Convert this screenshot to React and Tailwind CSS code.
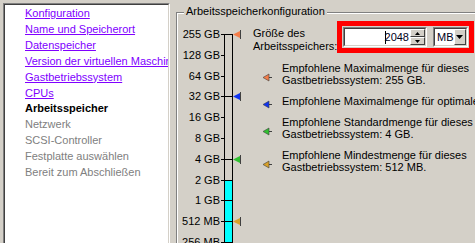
import React from "react";

const steps = [
  { name: "Konfiguration", state: "link" },
  { name: "Name und Speicherort", state: "link" },
  { name: "Datenspeicher", state: "link" },
  { name: "Version der virtuellen Maschine", state: "link" },
  { name: "Gastbetriebssystem", state: "link" },
  { name: "CPUs", state: "link" },
  { name: "Arbeitsspeicher", state: "current" },
  { name: "Netzwerk", state: "todo" },
  { name: "SCSI-Controller", state: "todo" },
  { name: "Festplatte auswählen", state: "todo" },
  { name: "Bereit zum Abschließen", state: "todo" },
];

const stepClass = {
  link: "text-[#8000ff] underline",
  current: "font-bold text-black",
  todo: "text-[#808080]",
};

const scale = ["255 GB", "128 GB", "64 GB", "32 GB", "16 GB", "8 GB", "4 GB", "2 GB", "1 GB", "512 MB", "256 MB"];
// tick rows in svg coords (svg top = y 24)
const ticks = [10, 31, 52, 72, 93, 114, 135, 156, 176, 197, 218];

const markers = [
  { y: 10, color: "#f47c48" },
  { y: 72, color: "#1034f0" },
  { y: 135, color: "#30c030" },
  { y: 197, color: "#d8a028" },
];

const legend = [
  { color: "#f47c48", lines: ["Empfohlene Maximalmenge für dieses", "Gastbetriebssystem: 255 GB."] },
  { color: "#1034f0", lines: ["Empfohlene Maximalmenge für optimale Leistung."] },
  { color: "#30c030", lines: ["Empfohlene Standardmenge für dieses", "Gastbetriebssystem: 4 GB."] },
  { color: "#d8a028", lines: ["Empfohlene Mindestmenge für dieses", "Gastbetriebssystem: 512 MB."] },
];

const Marker = ({ color }) => (
  <svg width="10" height="9" viewBox="0 0 10 9" className="shrink-0">
    <polygon points="1,4.5 7,1 7,8" fill={color} stroke="#404040" strokeWidth="0.6" />
    <rect x="7" y="4" width="3" height="1" fill="#404040" />
  </svg>
);

const Slider = () => (
  <svg width="24" height="240" viewBox="0 0 24 240" className="shrink-0">
    <rect x="5" y="156" width="7" height="84" fill="#00ffff" />
    <rect x="1" y="10" width="12" height="1" fill="#000" />
    <rect x="4" y="10" width="1" height="230" fill="#000" />
    <rect x="12" y="10" width="1" height="230" fill="#000" />
    {ticks.map((y) => (
      <rect key={y} x="1" y={y} width="4" height="1" fill="#000" />
    ))}
    {ticks.filter((y) => y >= 156).map((y) => (
      <rect key={"c" + y} x="4" y={y} width="9" height="1" fill="#000" />
    ))}
    {markers.map((m) => (
      <g key={m.y}>
        <rect x="4" y={m.y} width="9" height="1" fill="#000" />
        <polygon points={`13,${m.y + 0.5} 21,${m.y - 3.5} 21,${m.y + 4.5}`} fill={m.color} />
        <rect x="20" y={m.y - 4} width="1" height="9" fill="#404040" />
      </g>
    ))}
  </svg>
);

const SpinArrow = ({ up }) => (
  <svg width="5" height="3" viewBox="0 0 5 3">
    <polygon points={up ? "2.5,0 5,3 0,3" : "0,0 5,0 2.5,3"} fill="#000" />
  </svg>
);

export default function App() {
  return (
    <div className="w-[475px] h-[243px] overflow-hidden bg-[#d4d0c8] flex items-start font-['Liberation_Sans',Arial,sans-serif] text-[11px] text-black">
      {/* wizard steps */}
      <div className="ml-[3px] mt-[3px] w-[167px] h-[260px] shrink-0 border border-[#808080] border-r-white border-b-white">
        <div className="h-full border border-[#404040] border-r-[#d4d0c8] border-b-[#d4d0c8] bg-white pl-[20px] pt-[1px] overflow-hidden">
          {steps.map((s) => (
            <div key={s.name} className={`leading-[15.9px] whitespace-nowrap ${stepClass[s.state]}`}>
              {s.name}
            </div>
          ))}
        </div>
      </div>

      {/* group box */}
      <div className="ml-[6px] mt-[12px] w-[320px] h-[260px] shrink-0 relative border-t border-l border-[#808080]">
        <div className="absolute left-[7px] -top-[8px] px-[2px] bg-[#d4d0c8] leading-[13px]">
          Arbeitsspeicherkonfiguration
        </div>
        <div className="h-full border-t border-l border-white flex items-start">
          {/* scale */}
          <div className="flex items-start mt-[10px]">
            <div className="w-[42px] text-right">
              {scale.map((l) => (
                <div key={l} className="leading-[20.8px] whitespace-nowrap">{l}</div>
              ))}
            </div>
            <Slider />
          </div>

          {/* controls */}
          <div className="flex flex-col">
            <div className="flex items-start">
              <div className="w-[93px] pl-[9px] mt-[13px] leading-[13px] whitespace-nowrap">
                <div>Größe des</div>
                <div>Arbeitsspeichers:</div>
              </div>
              <div className="mt-[7px] w-[137px] h-[32px] border-[5px] border-[#ff0000] p-[1px] flex items-start gap-[6px]">
                {/* spin box */}
                <div className="w-[85px] h-[20px] border border-[#808080] border-r-white border-b-white">
                  <div className="h-full border border-[#404040] border-r-[#d4d0c8] border-b-[#d4d0c8] bg-white flex items-center justify-end">
                    <span className="w-px h-[13px] bg-black -mr-px" />
                    <span className="leading-[16px] pr-[1px] text-[#000020]">2048</span>
                    <div className="w-[15px] h-full flex flex-col">
                      <div className="h-1/2 bg-[#d4d0c8] border border-white border-r-[#404040] border-b-[#404040] flex items-center justify-center">
                        <SpinArrow up />
                      </div>
                      <div className="h-1/2 bg-[#d4d0c8] border border-white border-r-[#404040] border-b-[#404040] flex items-center justify-center">
                        <SpinArrow />
                      </div>
                    </div>
                  </div>
                </div>
                {/* unit combo */}
                <div className="w-[35px] h-[20px] border border-[#808080] border-r-white border-b-white">
                  <div className="h-full border border-[#404040] border-r-[#d4d0c8] border-b-[#d4d0c8] bg-white flex items-center">
                    <span className="flex-1 pl-[2px] leading-[16px] text-[#000020]">MB</span>
                    <div className="w-[13px] h-full bg-[#d4d0c8] border border-white border-r-[#404040] border-b-[#404040] flex items-center justify-center">
                      <svg width="7" height="4" viewBox="0 0 7 4">
                        <polygon points="0,0 7,0 3.5,4" fill="#000" />
                      </svg>
                    </div>
                  </div>
                </div>
              </div>
            </div>

            {/* legend */}
            <div className="mt-[9px] pl-[18px] flex flex-col gap-[9px]">
              {legend.map((item) => (
                <div key={item.lines[0]} className="flex items-center gap-[10px]">
                  <div className="translate-y-[3px]">
                    <Marker color={item.color} />
                  </div>
                  <div className="leading-[12px] whitespace-nowrap">
                    {item.lines.map((t) => (
                      <div key={t}>{t}</div>
                    ))}
                  </div>
                </div>
              ))}
            </div>
          </div>
        </div>
      </div>
    </div>
  );
}
